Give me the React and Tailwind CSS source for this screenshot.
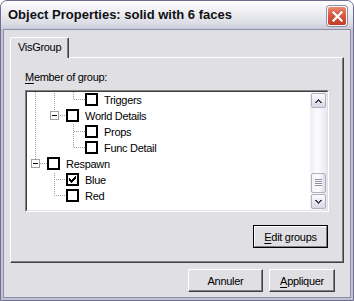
import React from 'react';

const C0 = 8;
const C1 = 27;
const C2 = 46;

function dotsV(x, y1, y2, out) {
  for (let y = y1; y <= y2; y++) {
    if ((x + y) % 2 === 0) out.push(<rect key={`v${x}-${y}`} x={x} y={y} width="1" height="1" />);
  }
}
function dotsH(y, x1, x2, out) {
  for (let x = x1; x <= x2; x++) {
    if ((x + y) % 2 === 0) out.push(<rect key={`h${x}-${y}`} x={x} y={y} width="1" height="1" />);
  }
}

const CHECK = [
  [6],
  [5, 6],
  [0, 4, 5, 6],
  [0, 1, 3, 4, 5],
  [0, 1, 2, 3, 4],
  [1, 2, 3],
  [2],
];

function CheckBox({ checked }) {
  return (
    <div className="mt-[1px] h-[13px] w-[13px] shrink-0 border-2 border-black bg-white">
      {checked && (
        <svg width="9" height="9" viewBox="0 0 9 9" shapeRendering="crispEdges">
          {CHECK.map((row, y) =>
            row.map((x) => <rect key={`${x}-${y}`} x={x + 1} y={y + 1} width="1" height="1" fill="#000" />)
          )}
        </svg>
      )}
    </div>
  );
}

function TreeRow({ width, v = [], h, box, checked, label }) {
  const dots = [];
  v.forEach(([x, y1, y2]) => dotsV(x, y1, y2, dots));
  if (h) dotsH(h[0], h[1], h[2], dots);
  return (
    <div className="flex h-[16px] shrink-0 items-start">
      <svg width={width} height="16" viewBox={`0 0 ${width} 16`} shapeRendering="crispEdges" className="shrink-0">
        <g fill="#a0a0a0">{dots}</g>
        {box !== undefined && (
          <g>
            <rect x={box - 4 + 0.5} y={3.5} width="8" height="8" fill="#fff" stroke="#a0a0a0" />
            <rect x={box - 2} y={7} width="5" height="1" fill="#000" />
          </g>
        )}
      </svg>
      <CheckBox checked={checked} />
      <span className="ml-[6px] whitespace-nowrap text-[11px] leading-[16px] tracking-[-0.3px]">{label}</span>
    </div>
  );
}

function Arrow({ up }) {
  const rows = up
    ? [[3], [2, 3, 4], [1, 2, 4, 5], [0, 1, 5, 6]]
    : [[0, 1, 5, 6], [1, 2, 4, 5], [2, 3, 4], [3]];
  return (
    <svg width="7" height="4" viewBox="0 0 7 4" shapeRendering="crispEdges">
      {rows.map((r, y) => r.map((x) => <rect key={`${x}-${y}`} x={x} y={y} width="1" height="1" fill="#3c3c4c" />))}
    </svg>
  );
}

function ScrollBtn({ up }) {
  return (
    <div className="h-[17px] shrink-0 p-[1px]">
      <div className="flex h-full w-full items-center justify-center rounded-[2px] border border-[#b0b0c2] bg-[linear-gradient(to_bottom,#fdfdfe,#e6e6ee_60%,#d8d8e2)]">
        <Arrow up={up} />
      </div>
    </div>
  );
}

function Scrollbar() {
  return (
    <div className="flex w-[17px] shrink-0 flex-col bg-[linear-gradient(to_right,#efeff4,#fcfcfe_40%,#f4f4f8_70%,#e6e6ee)]">
      <ScrollBtn up />
      <div className="flex flex-1 flex-col justify-end">
        <div className="mx-[1px] flex h-[20px] items-center justify-center rounded-[2px] border border-[#b0b0c2] bg-[linear-gradient(to_right,#f4f4f8,#fdfdfe_50%,#dcdce6)]">
          <svg width="7" height="8" viewBox="0 0 7 8" shapeRendering="crispEdges">
            {[0, 2, 4, 6].map((y) => (
              <g key={y}>
                <rect x="0" y={y} width="7" height="1" fill="#8c8ca0" />
                <rect x="1" y={y + 1} width="7" height="1" fill="#ffffff" />
              </g>
            ))}
          </svg>
        </div>
      </div>
      <ScrollBtn />
    </div>
  );
}

function ClassicButton({ children, width, isDefault }) {
  if (isDefault) {
    return (
      <div className={`flex h-[23px] ${width} border border-black`}>
        <div className="flex flex-1 items-center justify-center border border-t-white border-l-white border-b-[#808080] border-r-[#808080] bg-[#e0dfe3] text-[11px] leading-[16px] tracking-[-0.3px]">
          {children}
        </div>
      </div>
    );
  }
  return (
    <div className={`flex h-[23px] ${width} items-center justify-center border border-t-white border-l-white border-b-[#404040] border-r-[#404040] bg-[#e0dfe3] text-[11px] leading-[16px] tracking-[-0.3px] shadow-[inset_-1px_-1px_0_#808080]`}>
      {children}
    </div>
  );
}

function CloseBtn() {
  return (
    <div className="ml-auto mt-[5px] flex h-[20px] w-[20px] items-center justify-center rounded-[3px] border border-[#fafafc] bg-[linear-gradient(to_bottom,#eb8a74,#dc5a40_45%,#c63c24)] shadow-[0_0_0_1px_#8e8ea4]">
      <svg width="13" height="13" viewBox="0 0 13 13">
        <path d="M2.5 2.5 L10.5 10.5 M10.5 2.5 L2.5 10.5" stroke="#7a2414" strokeWidth="3.4" strokeLinecap="square" opacity="0.3" />
        <path d="M2.5 2.5 L10.5 10.5 M10.5 2.5 L2.5 10.5" stroke="#ffffff" strokeWidth="2.3" strokeLinecap="square" />
      </svg>
    </div>
  );
}

export default function App() {
  return (
    <div className="h-[301px] w-[354px] bg-white font-['Liberation_Sans',Arial,sans-serif] text-black">
      <div className="flex h-full w-full flex-col overflow-hidden rounded-t-[7px] border border-[#6f6e92] bg-[#c3c2d5]">
        <div className="flex h-[28px] shrink-0 items-start bg-[linear-gradient(to_bottom,#fdfdfe,#eeeef3_40%,#dcdce6_80%,#cacad8)] pl-[7px] pr-[6px]">
          <span className="mt-[6px] whitespace-nowrap text-[13px] font-bold leading-[16px] text-[#111]">
            Object Properties: solid with 6 faces
          </span>
          <CloseBtn />
        </div>
        <div className="mx-[2px] mb-[2px] flex flex-1 flex-col border border-[#8f8ea9] bg-[#e0dfe3] px-[6px] pt-[7px]">
          <div className="flex">
            <div className="relative z-10 -mb-[1px] h-[21px] w-[59px] rounded-t-[2px] border border-b-0 border-t-white border-l-white border-r-[#404040] bg-[#e0dfe3] pl-[7px] pt-[1px] text-[11px] leading-[16px] tracking-[-0.3px] shadow-[inset_-1px_0_0_#808080]">
              VisGroup
            </div>
          </div>
          <div className="flex h-[206px] w-[334px] flex-col items-start border border-t-white border-l-white border-b-[#404040] border-r-[#404040] pl-[14px] pt-[11px] shadow-[inset_-1px_-1px_0_#808080]">
            <div className="h-[16px] text-[11px] leading-[16px] tracking-[-0.3px]">
              <span className="underline underline-offset-[2px]">M</span>ember of group:
            </div>
            <div className="mt-[5px] h-[122px] w-[304px] border border-t-[#808080] border-l-[#808080] border-b-white border-r-white">
              <div className="flex h-full border border-t-[#404040] border-l-[#404040] border-b-[#e0dfe3] border-r-[#e0dfe3] bg-white">
                <div className="flex flex-1 flex-col overflow-hidden">
                  <TreeRow width={58} v={[[C0, 0, 15], [C1, 0, 15], [C2, 0, 7]]} h={[7, C2, 57]} label="Triggers" />
                  <TreeRow width={39} v={[[C0, 0, 15], [C1, 0, 2]]} box={C1} h={[7, C1 + 5, 38]} label="World Details" />
                  <TreeRow width={58} v={[[C0, 0, 15], [C2, 0, 15]]} h={[7, C2, 57]} label="Props" />
                  <TreeRow width={58} v={[[C0, 0, 15], [C2, 0, 7]]} h={[7, C2, 57]} label="Func Detail" />
                  <TreeRow width={20} v={[[C0, 0, 2]]} box={C0} h={[7, C0 + 5, 19]} label="Respawn" />
                  <TreeRow width={39} v={[[C1, 0, 15]]} h={[7, C1, 38]} checked label="Blue" />
                  <TreeRow width={39} v={[[C1, 0, 7]]} h={[7, C1, 38]} label="Red" />
                </div>
                <Scrollbar />
              </div>
            </div>
            <div className="mt-[13px] flex w-[304px] justify-end pr-[1px]">
              <ClassicButton width="w-[75px]" isDefault>
                <span>
                  <span className="underline underline-offset-[2px]">E</span>dit groups
                </span>
              </ClassicButton>
            </div>
          </div>
          <div className="mt-[6px] flex justify-end gap-[6px] pr-[9px]">
            <ClassicButton width="w-[75px]">Annuler</ClassicButton>
            <ClassicButton width="w-[66px]">
              <span>
                <span className="underline underline-offset-[2px]">A</span>ppliquer
              </span>
            </ClassicButton>
          </div>
        </div>
      </div>
    </div>
  );
}
